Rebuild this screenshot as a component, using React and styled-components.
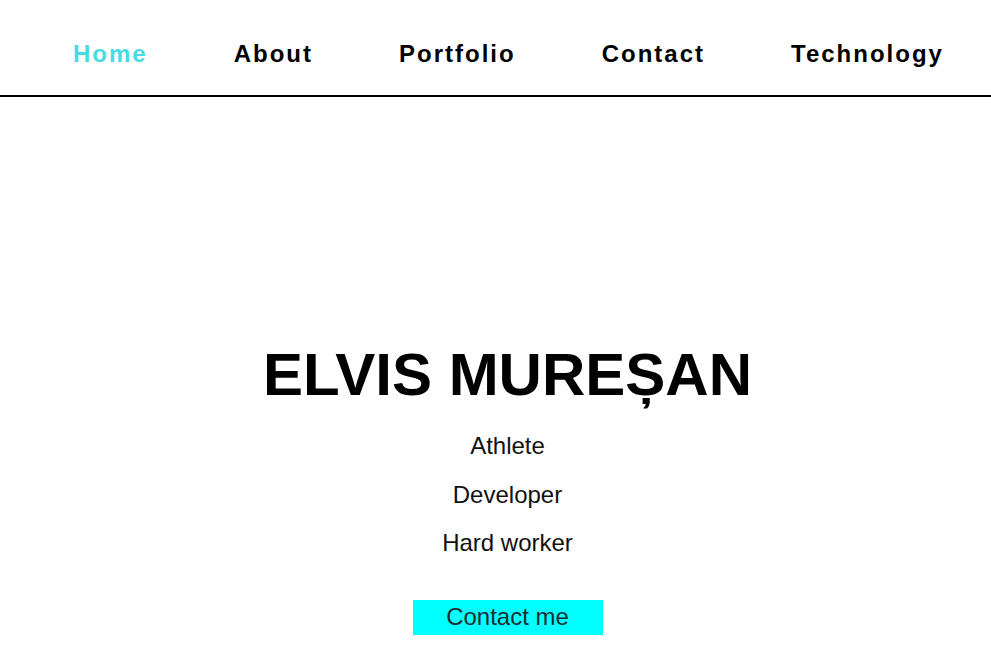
import React from "react"
import styled, { createGlobalStyle } from "styled-components"

const GlobalStyle = createGlobalStyle`
  body {
    margin: 0;
    background: #fff;
    font-family: "Liberation Sans", Arial, sans-serif;
  }
`

const Header = styled.header`
  border-bottom: 2px solid #000;
`

const NavList = styled.nav`
  display: flex;
  align-items: center;
  gap: 86px;
  padding: 40px 0 28px 73px;
`

const NavLink = styled.a`
  font-size: 24px;
  font-weight: 700;
  letter-spacing: 2px;
  line-height: 27px;
  color: ${(p) => (p.$active ? "#45dce4" : "#000")};
  text-decoration: none;
  cursor: pointer;
`

const Hero = styled.main`
  display: flex;
  flex-direction: column;
  align-items: center;
  padding: 243px 0 0 24px;
`

const Name = styled.h1`
  margin: 0;
  font-size: 60px;
  font-weight: 700;
  line-height: 69px;
  color: #000;
`

const Traits = styled.ul`
  list-style: none;
  margin: 23px 0 0;
  padding: 0;
  display: flex;
  flex-direction: column;
  align-items: center;
  gap: 21px;
`

const Trait = styled.li`
  font-size: 24px;
  line-height: 27.6px;
  color: #111;
`

const ContactButton = styled.button`
  margin-top: 43px;
  width: 190px;
  height: 35px;
  padding: 0;
  border: none;
  background: #00ffff;
  font-family: inherit;
  font-size: 24px;
  color: #1c2e30;
  cursor: pointer;
`

const links = ["Home", "About", "Portfolio", "Contact", "Technology"]
const traits = ["Athlete", "Developer", "Hard worker"]

const App = () => (
  <>
    <GlobalStyle />
    <Header>
      <NavList>
        {links.map((l, i) => (
          <NavLink key={l} $active={i === 0}>
            {l}
          </NavLink>
        ))}
      </NavList>
    </Header>
    <Hero>
      <Name>ELVIS MUREȘAN</Name>
      <Traits>
        {traits.map((t) => (
          <Trait key={t}>{t}</Trait>
        ))}
      </Traits>
      <ContactButton>Contact me</ContactButton>
    </Hero>
  </>
)

export default App
